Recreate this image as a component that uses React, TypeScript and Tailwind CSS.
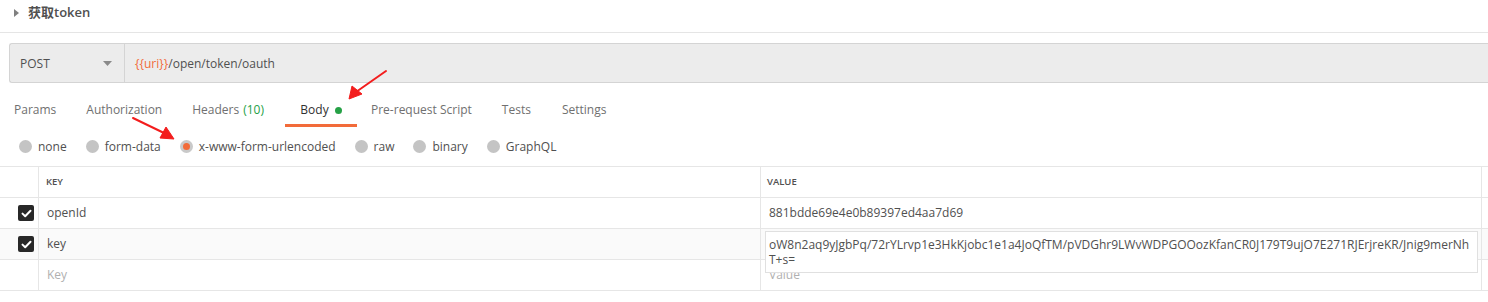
import React from "react";

const font = { fontFamily: '"Open Sans", "Noto Sans CJK SC", sans-serif' };

function Radio({ label, selected }: { label: string; selected?: boolean }) {
  return (
    <div className="flex items-center mr-[19px]">
      {selected ? (
        <span className="w-[13px] h-[13px] rounded-full bg-[#c9c9c9] flex items-center justify-center">
          <span className="w-[7px] h-[7px] rounded-full bg-[#f26b3a]" />
        </span>
      ) : (
        <span className="w-[13px] h-[13px] rounded-full bg-[#c4c4c4]" />
      )}
      <span className="ml-[6px] text-[12px] text-[#505050]">{label}</span>
    </div>
  );
}

function Check() {
  return (
    <span className="w-[16px] h-[16px] rounded-[2px] bg-[#282828] flex items-center justify-center">
      <svg width="11" height="9" viewBox="0 0 11 9">
        <path d="M1.5 4.6 L4.2 7.2 L9.5 1.8" stroke="#fff" strokeWidth="2" fill="none" strokeLinecap="round" strokeLinejoin="round" />
      </svg>
    </span>
  );
}

export default function App() {
  return (
    <div className="relative w-[1488px] h-[302px] bg-white overflow-hidden" style={font}>
      {/* title */}
      <div className="h-[33px] border-b border-[#e5e5e5]">
        <div className="flex items-center h-[25px] pl-[14px]">
          <svg width="6" height="8" viewBox="0 0 6 8" className="mr-[8px]">
            <path d="M0 0 L5 4 L0 8 Z" fill="#808080" />
          </svg>
          <span className="text-[13px] font-semibold text-[#505050]">获取token</span>
        </div>
      </div>

      {/* url bar */}
      <div className="mt-[10px] ml-[9px] h-[40px] flex bg-[#ececec] border border-[#d4d4d4] border-r-0 rounded-l-[3px]">
        <div className="w-[115px] flex items-center justify-between pl-[10px] pr-[12px] pt-[1px] border-r border-[#d4d4d4]">
          <span className="text-[12px] text-[#505050]">POST</span>
          <svg width="9" height="5" viewBox="0 0 9 5">
            <path d="M0 0 L9 0 L4.5 5 Z" fill="#8a8a8a" />
          </svg>
        </div>
        <div className="flex items-center pl-[10px] pt-[1px] text-[12px]">
          <span className="text-[#f26b3a]">{"{{uri}}"}</span>
          <span className="text-[#505050]">/open/token/oauth</span>
        </div>
      </div>

      {/* tabs */}
      <div className="flex h-[44px] items-stretch text-[12px] text-[#707070]">
        <div className="flex items-center pt-[10px] pl-[14px] pr-[16px]">Params</div>
        <div className="flex items-center pt-[10px] px-[14px]">Authorization</div>
        <div className="flex items-center pt-[10px] pl-[16px] pr-[21px]">
          Headers <span className="ml-[4px] text-[#26a146]">(10)</span>
        </div>
        <div className="flex items-center justify-center w-[72px] border-b-[3px] border-[#f26b3a] pt-[13px] text-[#303030]">
          Body
          <span className="ml-[6px] w-[7px] h-[7px] rounded-full bg-[#26a146]" />
        </div>
        <div className="flex items-center pt-[10px] px-[14px]">Pre-request Script</div>
        <div className="flex items-center pt-[10px] px-[16px]">Tests</div>
        <div className="flex items-center pt-[10px] px-[15px]">Settings</div>
      </div>

      {/* radios */}
      <div className="flex items-center h-[39px] pl-[19px]">
        <Radio label="none" />
        <Radio label="form-data" />
        <Radio label="x-www-form-urlencoded" selected />
        <Radio label="raw" />
        <Radio label="binary" />
        <Radio label="GraphQL" />
      </div>

      {/* table */}
      <div className="border-t border-[#e6e6e6] text-[12px] text-[#505050]">
        <div className="grid grid-cols-[39px_722px_721px_6px] h-[31px] border-b border-[#e6e6e6]">
          <div className="border-r border-[#e6e6e6]" />
          <div className="flex items-center pl-[7px] text-[9.5px] font-semibold text-[#505050] border-r border-[#e6e6e6]">KEY</div>
          <div className="flex items-center pl-[6px] text-[9.5px] font-semibold text-[#505050] border-r border-[#e6e6e6]">VALUE</div>
          <div />
        </div>
        <div className="grid grid-cols-[39px_722px_721px_6px] h-[31px] border-b border-[#e6e6e6]">
          <div className="flex items-center justify-end pr-[4px] border-r border-[#e6e6e6]"><Check /></div>
          <div className="flex items-center pl-[8px] border-r border-[#e6e6e6]">openId</div>
          <div className="flex items-center pl-[8px] border-r border-[#e6e6e6]">881bdde69e4e0b89397ed4aa7d69</div>
          <div />
        </div>
        <div className="relative grid grid-cols-[39px_722px_721px_6px] h-[31px] border-b border-[#e6e6e6] bg-[#fafafa]">
          <div className="flex items-center justify-end pr-[4px] border-r border-[#e6e6e6]"><Check /></div>
          <div className="flex items-center pl-[8px] border-r border-[#e6e6e6]">key</div>
          <div className="border-r border-[#e6e6e6]" />
          <div />
          <div className="absolute left-[765px] top-[2px] w-[713px] h-[42px] bg-white border border-[#e0e0e0] z-10 pl-[3px] pt-[5px] leading-[15px] overflow-hidden">
            <div className="whitespace-nowrap">oW8n2aq9yJgbPq/72rYLrvp1e3HkKjobc1e1a4JoQfTM/pVDGhr9LWvWDPGOOozKfanCR0J179T9ujO7E271RJErjreKR/Jnig9merNh</div>
            <div>T+s=</div>
          </div>
        </div>
        <div className="grid grid-cols-[39px_722px_721px_6px] h-[31px] border-b border-[#e6e6e6]">
          <div className="border-r border-[#e6e6e6]" />
          <div className="flex items-center pl-[8px] text-[#b0b0b0] border-r border-[#e6e6e6]">Key</div>
          <div className="flex items-center pl-[8px] text-[#b0b0b0] border-r border-[#e6e6e6]">Value</div>
          <div />
        </div>
      </div>

      {/* annotation arrows */}
      <svg className="absolute left-0 top-0 pointer-events-none" width="1488" height="302">
        <path d="M386 71 L356 92" stroke="#f31d1d" strokeWidth="2" strokeLinecap="round" />
        <path d="M349 99 L352 86 L362 94 Z" fill="#f31d1d" stroke="#f31d1d" strokeWidth="1" strokeLinejoin="round" />
        <path d="M133 118 L164 133" stroke="#f31d1d" strokeWidth="2" strokeLinecap="round" />
        <path d="M174 139 L160 138 L166 127 Z" fill="#f31d1d" stroke="#f31d1d" strokeWidth="1" strokeLinejoin="round" />
      </svg>
    </div>
  );
}
